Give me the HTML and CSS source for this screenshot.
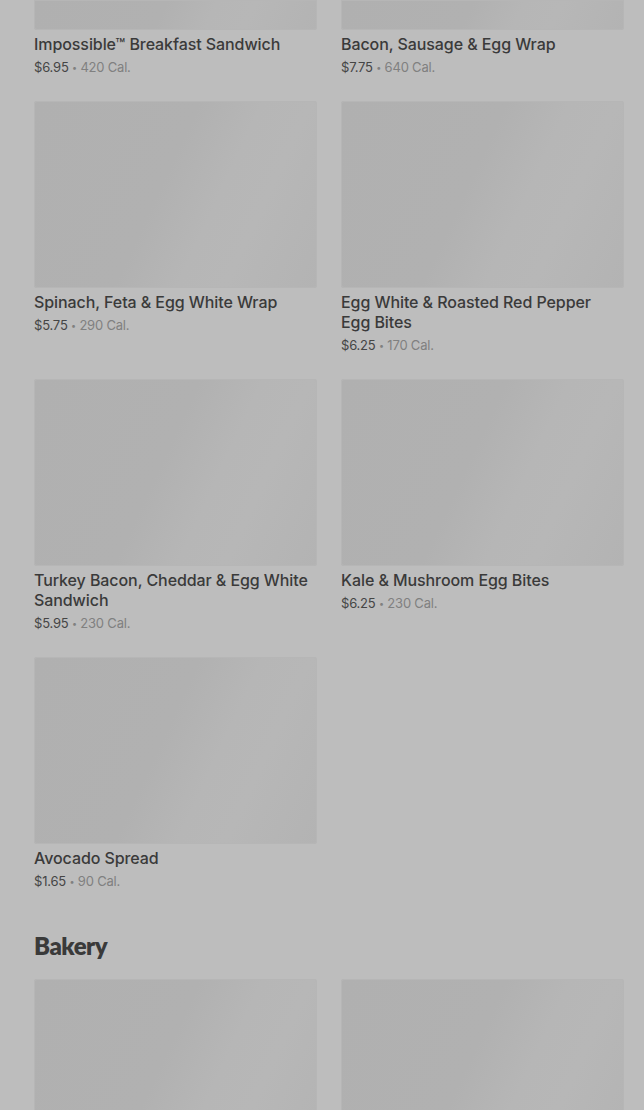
FILE: index.html
```html
<!DOCTYPE html>
<html lang="en">
<head>
<meta charset="utf-8">
<link rel="stylesheet" href="styles.css">
</head>
<body>
<main class="menu">
  <section class="section section-first">
    <div class="grid">
      <div class="card card-top">
        <div class="thumb thumb-top"></div>
        <div class="name">Impossible™ Breakfast Sandwich</div>
        <div class="meta"><span class="price">$6.95</span> <span class="cal"><span class="dot">•</span> 420 Cal.</span></div>
      </div>
      <div class="card card-top">
        <div class="thumb thumb-top"></div>
        <div class="name">Bacon, Sausage &amp; Egg Wrap</div>
        <div class="meta"><span class="price">$7.75</span> <span class="cal"><span class="dot">•</span> 640 Cal.</span></div>
      </div>
      <div class="card">
        <div class="thumb"></div>
        <div class="name">Spinach, Feta &amp; Egg White Wrap</div>
        <div class="meta"><span class="price">$5.75</span> <span class="cal"><span class="dot">•</span> 290 Cal.</span></div>
      </div>
      <div class="card">
        <div class="thumb"></div>
        <div class="name">Egg White &amp; Roasted Red Pepper Egg Bites</div>
        <div class="meta"><span class="price">$6.25</span> <span class="cal"><span class="dot">•</span> 170 Cal.</span></div>
      </div>
      <div class="card">
        <div class="thumb"></div>
        <div class="name">Turkey Bacon, Cheddar &amp; Egg White Sandwich</div>
        <div class="meta"><span class="price">$5.95</span> <span class="cal"><span class="dot">•</span> 230 Cal.</span></div>
      </div>
      <div class="card">
        <div class="thumb"></div>
        <div class="name">Kale &amp; Mushroom Egg Bites</div>
        <div class="meta"><span class="price">$6.25</span> <span class="cal"><span class="dot">•</span> 230 Cal.</span></div>
      </div>
      <div class="card">
        <div class="thumb"></div>
        <div class="name">Avocado Spread</div>
        <div class="meta"><span class="price">$1.65</span> <span class="cal"><span class="dot">•</span> 90 Cal.</span></div>
      </div>
    </div>
  </section>
  <section class="section">
    <h2 class="section-title">Bakery</h2>
    <div class="grid">
      <div class="card">
        <div class="thumb"></div>
      </div>
      <div class="card">
        <div class="thumb"></div>
      </div>
    </div>
  </section>
</main>
</body>
</html>
```

FILE: styles.css
```css
html, body {
  margin: 0;
  padding: 0;
  background: #bdbdbd;
  overflow: hidden;
  height: 1110px;
}

body {
  font-family: Inter, "Noto Sans", sans-serif;
  color: #3c3c3c;
}

.menu {
  padding: 0 20px 0 34px;
}

.grid {
  display: grid;
  grid-template-columns: 283px 283px;
  column-gap: 24px;
  row-gap: 24px;
}

.thumb {
  height: 187px;
  border-radius: 3px;
  background: linear-gradient(115deg, #b0b0b0 0%, #b1b1b1 45%, #b6b6b6 62%, #b7b7b7 75%, #b3b3b3 100%);
  box-shadow: inset 0 0 0 1px #b6b6b6;
}

.thumb-top {
  height: 30px;
  border-radius: 0 0 3px 3px;
}

.name {
  margin-top: 4px;
  padding-right: 6px;
  font-size: 16px;
  line-height: 20px;
  font-weight: 500;
  color: #3a3a3a;
  letter-spacing: -0.08px;
}

.meta {
  margin-top: 3px;
  height: 20px;
  font-size: 13px;
  line-height: 20px;
  letter-spacing: -0.2px;
}

.price {
  color: #454545;
}

.cal {
  color: #808080;
}

.dot {
  font-size: 9px;
  line-height: 0;
  vertical-align: 1px;
}

.section-title {
  margin: 39px 0 17px;
  font-family: Lato, "Noto Sans", sans-serif;
  font-size: 24px;
  line-height: 32px;
  font-weight: 800;
  color: #3a3a3a;
  letter-spacing: -0.5px;
}
```
